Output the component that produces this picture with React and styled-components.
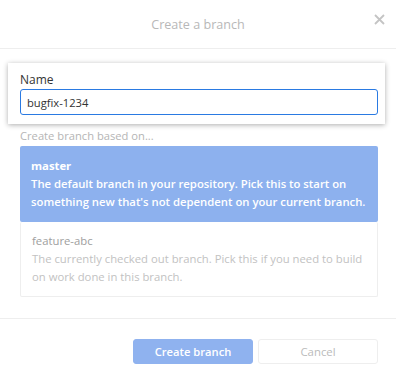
import React, { useEffect, useRef } from 'react';
import styled, { createGlobalStyle } from 'styled-components';

const GlobalStyle = createGlobalStyle`
  body {
    margin: 0;
    background: #fff;
    font-family: 'Open Sans', 'Noto Sans', sans-serif;
  }
`;

const Dialog = styled.div`
  width: 396px;
  height: 381px;
  background: #fff;
  display: flex;
  flex-direction: column;
`;

const Header = styled.div`
  position: relative;
  height: 48px;
  border-bottom: 1px solid #eeeeee;
  display: flex;
  align-items: center;
  justify-content: center;
`;

const Title = styled.div`
  font-size: 12.6px;
  color: #b8b8b8;
  padding-top: 1px;
`;

const CloseButton = styled.button`
  position: absolute;
  top: 11px;
  right: 9px;
  width: 16px;
  height: 16px;
  padding: 0;
  border: none;
  background: none;
  display: flex;
  align-items: center;
  justify-content: center;
  cursor: pointer;
`;

const Body = styled.div`
  padding: 14px 18px 0 20px;
`;

const FormCard = styled.div`
  margin: 0 -7px 0 -12px;
  padding: 8px 7px 9px 12px;
  background: #fff;
  box-shadow: 0 1px 5px rgba(0, 0, 0, 0.32);
`;

const Label = styled.label`
  display: block;
  font-size: 12px;
  line-height: 17px;
  color: #333;
  margin-bottom: 1px;
`;

const NameInput = styled.input`
  box-sizing: border-box;
  width: 100%;
  height: 26px;
  padding: 0 6px;
  border: 1px solid #2a7ae2;
  border-radius: 3px;
  font-family: inherit;
  font-size: 11.2px;
  color: #333;
  outline: none;
  caret-color: #222;
`;

const Hint = styled.div`
  margin-top: 4px;
  margin-bottom: 3px;
  font-size: 11.2px;
  line-height: 15px;
  color: #b5b5b5;
`;

const Options = styled.div`
  display: flex;
  flex-direction: column;
`;

const Option = styled.div`
  box-sizing: border-box;
  padding: ${p => (p.$selected ? '11px 11px' : '10px 11px')};
  border-radius: 2px;
  background: ${p => (p.$selected ? '#8db1ee' : '#fff')};
  border: ${p => (p.$selected ? 'none' : '1px solid #eeeeee')};
  border-top: none;
  font-size: 11.3px;
  line-height: 18px;
  cursor: pointer;
`;

const OptionName = styled.div`
  font-weight: ${p => (p.$selected ? 700 : 400)};
  color: ${p => (p.$selected ? '#fff' : '#9e9e9e')};
`;

const OptionDesc = styled.div`
  font-weight: ${p => (p.$selected ? 600 : 400)};
  color: ${p => (p.$selected ? '#fff' : '#c2c2c2')};
`;

const Divider = styled.div`
  margin-top: 21px;
  border-top: 1px solid #eeeeee;
`;

const Footer = styled.div`
  display: flex;
  justify-content: flex-end;
  gap: 5px;
  padding: 20px 18px 0 0;
`;

const Button = styled.button`
  width: 120px;
  height: 25px;
  border-radius: 3px;
  font-family: inherit;
  font-size: ${p => (p.$primary ? '11.2px' : '11.4px')};
  cursor: pointer;
  background: ${p => (p.$primary ? '#8fb2ef' : '#fff')};
  color: ${p => (p.$primary ? '#fff' : '#bbbbbb')};
  border: 1px solid ${p => (p.$primary ? '#8fb2ef' : '#eeeeee')};
  font-weight: ${p => (p.$primary ? 600 : 400)};
`;

const branches = [
  {
    name: 'master',
    desc: "The default branch in your repository. Pick this to start on something new that's not dependent on your current branch.",
    selected: true,
  },
  {
    name: 'feature-abc',
    desc: 'The currently checked out branch. Pick this if you need to build on work done in this branch.',
    selected: false,
  },
];

const App = () => {
  const inputRef = useRef(null);

  useEffect(() => {
    const el = inputRef.current;
    if (el) {
      el.focus();
      el.setSelectionRange(el.value.length, el.value.length);
    }
  }, []);

  return (
    <>
      <GlobalStyle />
      <Dialog>
        <Header>
          <Title>Create a branch</Title>
          <CloseButton aria-label="Close">
            <svg width="11" height="11" viewBox="0 0 11 11">
              <path d="M1 1L10 10M10 1L1 10" stroke="#c4c4c4" strokeWidth="1.8" />
            </svg>
          </CloseButton>
        </Header>
        <Body>
          <FormCard>
            <Label htmlFor="branch-name">Name</Label>
            <NameInput id="branch-name" ref={inputRef} defaultValue="bugfix-1234" />
          </FormCard>
          <Hint>Create branch based on...</Hint>
          <Options>
            {branches.map(b => (
              <Option key={b.name} $selected={b.selected}>
                <OptionName $selected={b.selected}>{b.name}</OptionName>
                <OptionDesc $selected={b.selected}>{b.desc}</OptionDesc>
              </Option>
            ))}
          </Options>
        </Body>
        <Divider />
        <Footer>
          <Button $primary>Create branch</Button>
          <Button>Cancel</Button>
        </Footer>
      </Dialog>
    </>
  );
};

export default App;
